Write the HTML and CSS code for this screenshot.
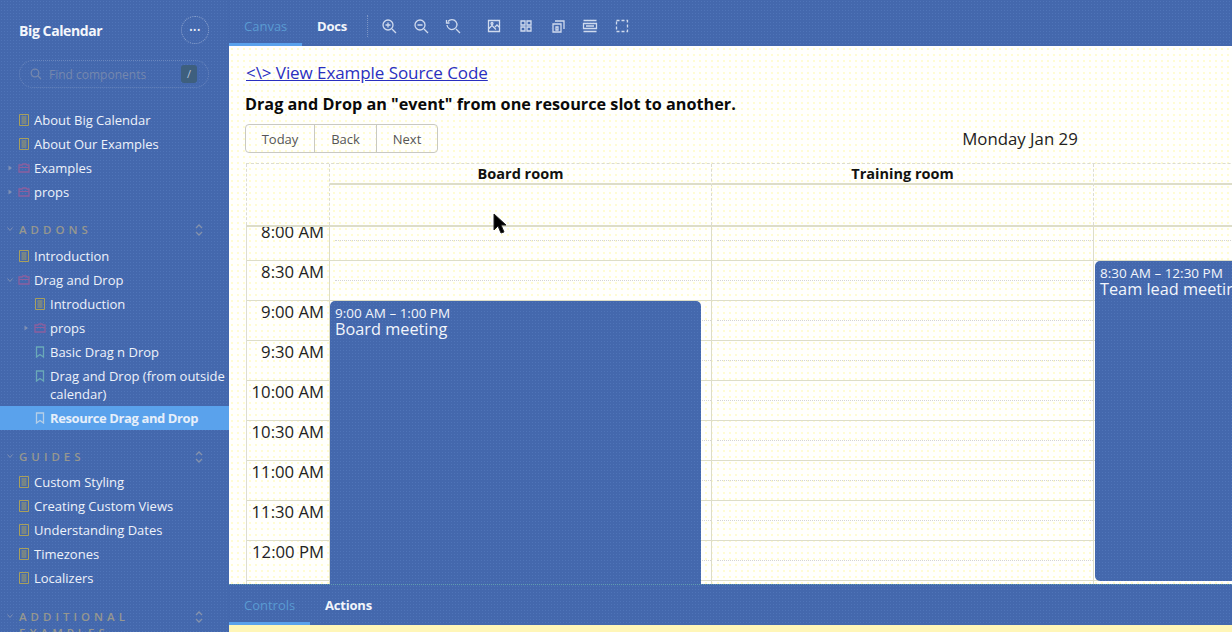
FILE: index.html
```html
<!DOCTYPE html>
<html lang="en">
<head>
    <meta charset="UTF-8">
    <meta name="viewport" content="width=device-width, initial-scale=1.0">
    <title>Big Calendar - Resource Drag and Drop</title>
    <link rel="stylesheet" href="styles.css">
</head>
<body>
    <svg class="svg-defs" width="0" height="0">
        <symbol id="doc" viewBox="0 0 12 12"><path d="M1.5.5h9v11h-9z" fill="none" stroke="currentColor"/><path d="M3.5 3h5M3.5 5h5M3.5 7h5M3.5 9h5" stroke="currentColor"/></symbol>
        <symbol id="folder" viewBox="0 0 12 12"><path d="M1 3h3l1-1h3l1 1h2v7H1z" fill="none" stroke="currentColor" stroke-width="1.3"/><path d="M1 5.500h10" stroke="currentColor"/></symbol>
        <symbol id="mark" viewBox="0 0 12 12"><path d="M2.500 1h7v10L6 8.500 2.500 11z" fill="none" stroke="currentColor" stroke-width="1.300"/></symbol>
        <symbol id="right" viewBox="0 0 8 8"><path d="M2.500 1.500 6 4 2.500 6.500z" fill="currentColor"/></symbol>
        <symbol id="down" viewBox="0 0 8 8"><path d="M1.500 2.500 4 5.500 6.500 2.500" fill="none" stroke="currentColor"/></symbol>
        <symbol id="updown" viewBox="0 0 10 14"><path d="M2 5l3-3 3 3M2 9l3 3 3-3" fill="none" stroke="currentColor" stroke-width="1.300"/></symbol>
    </svg>

    <div class="app">
        <aside class="sidebar">
            <div class="brand">
                <span class="brand-name">Big Calendar</span>
                <span class="menu-btn">&bull;&bull;&bull;</span>
            </div>
            <div class="search">
                <svg class="search-icon" width="12" height="12" viewBox="0 0 12 12"><circle cx="5" cy="5" r="3.800" fill="none" stroke="currentColor" stroke-width="1.300"/><path d="M8 8l3 3" stroke="currentColor" stroke-width="1.300"/></svg>
                <span class="search-text">Find components</span>
                <span class="search-key">/</span>
            </div>

            <div class="tree tree-top">
                <div class="row"><svg class="ico doc"><use href="#doc"/></svg>About Big Calendar</div>
                <div class="row"><svg class="ico doc"><use href="#doc"/></svg>About Our Examples</div>
                <div class="row"><svg class="arrow"><use href="#right"/></svg><svg class="ico folder"><use href="#folder"/></svg>Examples</div>
                <div class="row"><svg class="arrow"><use href="#right"/></svg><svg class="ico folder"><use href="#folder"/></svg>props</div>
            </div>

            <div class="section-head"><svg class="arrow"><use href="#down"/></svg><span class="section-name">ADDONS</span><svg class="updown"><use href="#updown"/></svg></div>
            <div class="tree">
                <div class="row"><svg class="ico doc"><use href="#doc"/></svg>Introduction</div>
                <div class="row"><svg class="arrow"><use href="#down"/></svg><svg class="ico folder"><use href="#folder"/></svg>Drag and Drop</div>
                <div class="row sub"><svg class="ico doc"><use href="#doc"/></svg>Introduction</div>
                <div class="row sub"><svg class="arrow"><use href="#right"/></svg><svg class="ico folder"><use href="#folder"/></svg>props</div>
                <div class="row sub"><svg class="ico mark"><use href="#mark"/></svg>Basic Drag n Drop</div>
                <div class="row sub"><svg class="ico mark"><use href="#mark"/></svg><span>Drag and Drop (from outside calendar)</span></div>
                <div class="row sub active"><svg class="ico mark"><use href="#mark"/></svg>Resource Drag and Drop</div>
            </div>

            <div class="section-head guides"><svg class="arrow"><use href="#down"/></svg><span class="section-name">GUIDES</span><svg class="updown"><use href="#updown"/></svg></div>
            <div class="tree">
                <div class="row"><svg class="ico doc"><use href="#doc"/></svg>Custom Styling</div>
                <div class="row"><svg class="ico doc"><use href="#doc"/></svg>Creating Custom Views</div>
                <div class="row"><svg class="ico doc"><use href="#doc"/></svg>Understanding Dates</div>
                <div class="row"><svg class="ico doc"><use href="#doc"/></svg>Timezones</div>
                <div class="row"><svg class="ico doc"><use href="#doc"/></svg>Localizers</div>
            </div>

            <div class="section-head additional"><svg class="arrow"><use href="#down"/></svg><span class="section-name">ADDITIONAL EXAMPLES</span><svg class="updown"><use href="#updown"/></svg></div>
        </aside>

        <main class="main">
            <div class="topbar">
                <span class="tab active canvas-tab">Canvas</span>
                <span class="tab docs-tab">Docs</span>
                <span class="divider"></span>
                <div class="tools zoom-tools">
                    <svg width="16" height="16" viewBox="0 0 16 16"><circle cx="7" cy="7" r="5" /><path d="M11 11l4 4M4.500 7h5M7 4.500v5"/></svg>
                    <svg width="16" height="16" viewBox="0 0 16 16"><circle cx="7" cy="7" r="5" /><path d="M11 11l4 4M4.500 7h5"/></svg>
                    <svg width="16" height="16" viewBox="0 0 16 16"><path d="M3 3.500A5 5 0 1 1 2 7M11 11l4 4M1.500 2v3h3"/></svg>
                </div>
                <div class="tools view-tools">
                    <svg width="16" height="16" viewBox="0 0 16 16"><path d="M2.500 2.500h11v11h-11zM2.500 11l3.500-3.500 4 4M9 9l2-2 2.500 2.500"/><circle cx="6" cy="5.500" r="1"/></svg>
                    <svg width="16" height="16" viewBox="0 0 16 16"><path d="M3 3h4v4H3zM9 3h4v4H9zM3 9h4v4H3zM9 9h4v4H9z"/></svg>
                    <svg width="16" height="16" viewBox="0 0 16 16"><path d="M3 6h8v8H3zM5 3h9v8M6 9h2v3H6z"/></svg>
                    <svg width="16" height="16" viewBox="0 0 16 16"><path d="M1.500 2.500h13M1.500 13.500h13M1.500 5.500h13v5h-13zM4 8h8"/></svg>
                    <svg width="16" height="16" viewBox="0 0 16 16"><path d="M2.500 2.500h11v11h-11z" stroke-dasharray="3 2"/></svg>
                </div>
            </div>

            <div class="canvas">
                <a class="source-link" href="#">&lt;\&gt; View Example Source Code</a>
                <p class="intro">Drag and Drop an "event" from one resource slot to another.</p>

                <div class="calendar">
                    <div class="cal-toolbar">
                        <div class="btn-group">
                            <button>Today</button>
                            <button>Back</button>
                            <button>Next</button>
                        </div>
                        <span class="cal-label">Monday Jan 29</span>
                    </div>

                    <div class="cal-head">
                        <div class="head-gutter"></div>
                        <div class="head-col">
                            <div class="head-name">Board room</div>
                            <div class="all-day"></div>
                        </div>
                        <div class="head-col">
                            <div class="head-name">Training room</div>
                            <div class="all-day"></div>
                        </div>
                        <div class="head-col">
                            <div class="head-name">Meeting room</div>
                            <div class="all-day"></div>
                        </div>
                    </div>

                    <div class="cal-scroll">
                        <div class="cal-grid">
                            <div class="gutter">
                                <div class="time">8:00 AM</div>
                                <div class="time">8:30 AM</div>
                                <div class="time">9:00 AM</div>
                                <div class="time">9:30 AM</div>
                                <div class="time">10:00 AM</div>
                                <div class="time">10:30 AM</div>
                                <div class="time">11:00 AM</div>
                                <div class="time">11:30 AM</div>
                                <div class="time">12:00 PM</div>
                                <div class="time"></div>
                            </div>
                            <div class="col">
                                <div class="slot"></div><div class="slot"></div><div class="slot"></div><div class="slot"></div><div class="slot"></div>
                                <div class="slot"></div><div class="slot"></div><div class="slot"></div><div class="slot"></div><div class="slot"></div>
                                <div class="event board">
                                    <div class="event-time">9:00 AM – 1:00 PM</div>
                                    <div class="event-title">Board meeting</div>
                                </div>
                            </div>
                            <div class="col">
                                <div class="slot"></div><div class="slot"></div><div class="slot"></div><div class="slot"></div><div class="slot"></div>
                                <div class="slot"></div><div class="slot"></div><div class="slot"></div><div class="slot"></div><div class="slot"></div>
                            </div>
                            <div class="col">
                                <div class="slot"></div><div class="slot"></div><div class="slot"></div><div class="slot"></div><div class="slot"></div>
                                <div class="slot"></div><div class="slot"></div><div class="slot"></div><div class="slot"></div><div class="slot"></div>
                                <div class="event team">
                                    <div class="event-time">8:30 AM – 12:30 PM</div>
                                    <div class="event-title">Team lead meeting</div>
                                </div>
                            </div>
                        </div>
                    </div>
                </div>
            </div>

            <div class="panel-tabs">
                <span class="tab active controls-tab">Controls</span>
                <span class="tab actions-tab">Actions</span>
            </div>
            <div class="panel-body"></div>
        </main>

        <svg class="cursor" width="14" height="22" viewBox="0 0 14 22"><path d="M1 1v16l4-4 3 7 3-1-3-7h5z" fill="#000" stroke="#222"/></svg>
    </div>
</body>
</html>
```

FILE: styles.css
```css
html, body {
    margin: 0;
    height: 100%;
    overflow: hidden;
}
body {
    font-family: "Open Sans", "Noto Sans", sans-serif;
    background-color: #4468ad;
}
.svg-defs {
    position: absolute;
}
.app {
    position: relative;
    display: flex;
    height: 632px;
    overflow: hidden;
}
.cursor {
    position: absolute;
    left: 493px;
    top: 213px;
}

/* sidebar */
.sidebar {
    width: 229px;
    flex-shrink: 0;
    overflow: hidden;
    color: #eef2fa;
    background-color: #4468ad;
    background-image: radial-gradient(#4f74b8 0.7px, transparent 0.8px);
    background-size: 3px 3px;
}
.brand {
    display: flex;
    justify-content: space-between;
    align-items: center;
    height: 28px;
    padding: 16px 20px 0 19px;
}
.brand-name {
    font-size: 14px;
    font-weight: 700;
    color: #f4f6fb;
    letter-spacing: -0.4px;
}
.menu-btn {
    width: 26px;
    height: 26px;
    line-height: 25px;
    text-align: center;
    font-size: 9px;
    letter-spacing: 0.5px;
    border: 1px dotted #8ea4cf;
    border-radius: 50%;
}
.search {
    display: flex;
    align-items: center;
    height: 26px;
    margin: 16px 20px 0 19px;
    padding: 0 11px 0 9px;
    border: 1px dotted #6a86bd;
    border-radius: 14px;
    color: #7587ad;
    font-size: 12px;
}
.search-icon {
    margin-left: 1px;
    margin-right: 7px;
}
.search-text {
    flex: 1;
}
.search-key {
    width: 16px;
    height: 18px;
    line-height: 18px;
    text-align: center;
    border-radius: 3px;
    background-color: #3e5f7e;
    color: #b9c4d8;
    font-size: 11px;
}
.tree {
    font-size: 13px;
}
.tree-top {
    margin-top: 20px;
}
.row {
    position: relative;
    display: flex;
    align-items: center;
    min-height: 24px;
    padding: 3px 0 3px 34px;
    line-height: 18px;
    box-sizing: border-box;
}
.row.sub {
    padding-left: 50px;
}
.row .ico {
    position: absolute;
    left: 18px;
    top: 6px;
    width: 12px;
    height: 12px;
}
.row.sub .ico {
    left: 34px;
}
.row .arrow {
    position: absolute;
    left: 6px;
    top: 8px;
    width: 8px;
    height: 8px;
    color: #7f90b4;
}
.row.sub .arrow {
    left: 22px;
}
.doc {
    color: #a9a05c;
}
.folder {
    color: #8c5f9e;
}
.mark {
    color: #6aa9b8;
}
.row.active {
    background-color: #5aa2ec;
    font-weight: 700;
    color: #e6effa;
    letter-spacing: -0.400px;
}
.row.active .mark {
    color: #b5cfe8;
}
.section-head {
    position: relative;
    display: flex;
    justify-content: space-between;
    margin: 18px 25px 6px 19px;
    line-height: 16px;
    font-size: 11.500px;
    font-weight: 600;
    color: #96978f;
}
.section-head.guides {
    margin-top: 19px;
    margin-bottom: 5px;
}
.section-head.additional {
    margin-top: 19px;
}
.section-name {
    letter-spacing: 4px;
    width: 150px;
}
.section-head .arrow {
    position: absolute;
    left: -13px;
    top: 3px;
    width: 8px;
    height: 8px;
    color: #7f90b4;
}
.updown {
    width: 10px;
    height: 14px;
    margin-top: 1px;
    color: #8592ac;
}

/* main column */
.main {
    flex: 1;
    min-width: 0;
    display: flex;
    flex-direction: column;
}
.topbar, .panel-tabs {
    display: flex;
    align-items: center;
    flex-shrink: 0;
    box-sizing: border-box;
    background-color: #4468ad;
    background-image: radial-gradient(#4f74b8 0.7px, transparent 0.8px);
    background-size: 3px 3px;
}
.topbar {
    height: 46px;
    padding-top: 6px;
}
.tab {
    display: flex;
    align-items: center;
    box-sizing: border-box;
    height: 100%;
    padding: 0 15px;
    font-size: 13px;
    font-weight: 700;
    color: #f2f5fb;
    letter-spacing: -0.2px;
}
.tab.active {
    padding-top: 3px;
    font-weight: 400;
    color: #5a9bd2;
    border-bottom: 3px solid #5aa2ec;
    letter-spacing: 0;
}
.canvas-tab {
    width: 73px;
}
.divider {
    height: 22px;
    margin-left: 5px;
    border-left: 1px dotted #7c95c6;
}
.tools {
    display: flex;
    gap: 16px;
}
.tools svg {
    fill: none;
    stroke: #cfdaee;
    stroke-width: 1.300;
}
.zoom-tools {
    margin-left: 13px;
}
.view-tools {
    margin-left: 25px;
}

/* story canvas */
.canvas {
    flex: 1;
    min-height: 0;
    overflow: hidden;
    padding: 15px 0 0 16px;
    background-color: #fffffd;
    background-image: radial-gradient(#fffcd0 0.7px, transparent 0.8px);
    background-size: 6px 6px;
}
.source-link {
    display: block;
    margin-left: 1px;
    font-size: 17px;
    letter-spacing: -0.070px;
    line-height: 23px;
    color: #2a2fc0;
}
.intro {
    margin: 8px 0 0;
    font-size: 16.200px;
    letter-spacing: 0.020px;
    line-height: 24px;
    font-weight: 700;
    color: #0a0a0a;
}
.calendar {
    width: 1231px;
    margin-top: 8px;
}
.cal-toolbar {
    display: flex;
    align-items: center;
    height: 29px;
    margin-bottom: 10px;
}
.btn-group {
    display: flex;
    flex-shrink: 0;
}
.btn-group button {
    height: 29px;
    padding: 0 15px;
    margin: 0;
    margin-left: -1px;
    border: 1px solid #c9c9c2;
    background: transparent;
    font-family: inherit;
    font-size: 13px;
    color: #555;
}
.btn-group button:first-child {
    margin-left: 0;
    border-radius: 4px 0 0 4px;
    width: 70px;
}
.btn-group button:nth-child(2) {
    width: 63px;
}
.btn-group button:last-child {
    border-radius: 0 4px 4px 0;
    width: 62px;
}
.cal-label {
    flex: 1;
    padding-left: 126px;
    text-align: center;
    font-size: 16.800px;
    color: #222;
}
.cal-head {
    display: flex;
    height: 64px;
    box-sizing: border-box;
    border-top: 1px dashed #dcdcd0;
    border-bottom: 2px solid #ddddc8;
    margin-left: 1px;
}
.head-gutter {
    width: 83px;
    flex-shrink: 0;
    border-left: 1px dashed #dcdcd0;
    box-sizing: border-box;
}
.head-col {
    width: 382px;
    flex-shrink: 0;
    box-sizing: border-box;
    border-left: 1px dashed #dcdcd0;
}
.head-name {
    height: 19px;
    line-height: 19px;
    text-align: center;
    font-size: 14.500px;
    font-weight: 700;
    color: #111;
    border-bottom: 2px solid #ddddc8;
}
.cal-scroll {
    height: 357px;
    overflow: hidden;
    margin-left: 1px;
}
.cal-grid {
    display: flex;
    margin-top: -6px;
}
.gutter {
    width: 84px;
    flex-shrink: 0;
    box-sizing: border-box;
    border-left: 1px solid #ddddd0;
    border-right: 1px solid #ddddc8;
}
.time {
    height: 40px;
    box-sizing: border-box;
    padding-right: 5px;
    border-bottom: 1px solid #ddddc8;
    text-align: right;
    font-size: 16.700px;
    line-height: 22px;
    color: #222;
}
.col {
    position: relative;
    width: 382px;
    flex-shrink: 0;
    box-sizing: border-box;
    border-right: 1px solid #ddddc8;
}
.slot {
    height: 40px;
    box-sizing: border-box;
    border-bottom: 1px solid #ddddc8;
}
.slot::before {
    content: "";
    display: block;
    height: 19px;
    margin-left: 5px;
    border-bottom: 1px dotted #d4d4d4;
}
.event {
    position: absolute;
    box-sizing: border-box;
    left: 0;
    width: 371px;
    height: 320px;
    padding: 4px 5px;
    border-radius: 5px;
    color: #f2f5fb;
    background-color: #4468ad;
    background-image: radial-gradient(#4f74b8 0.7px, transparent 0.8px);
    background-size: 3px 3px;
}
.board {
    top: 80px;
}
.team {
    top: 40px;
    left: 1px;
}
.event-time {
    font-size: 13.500px;
    line-height: 16px;
}
.event-title {
    font-size: 16.300px;
    line-height: 16px;
}

/* addon panel */
.panel-tabs {
    height: 41px;
    border-top: 1px dotted #5f9db0;
}
.controls-tab {
    width: 81px;
}
.panel-body {
    height: 7px;
    background-color: #fff6b8;
}
```
